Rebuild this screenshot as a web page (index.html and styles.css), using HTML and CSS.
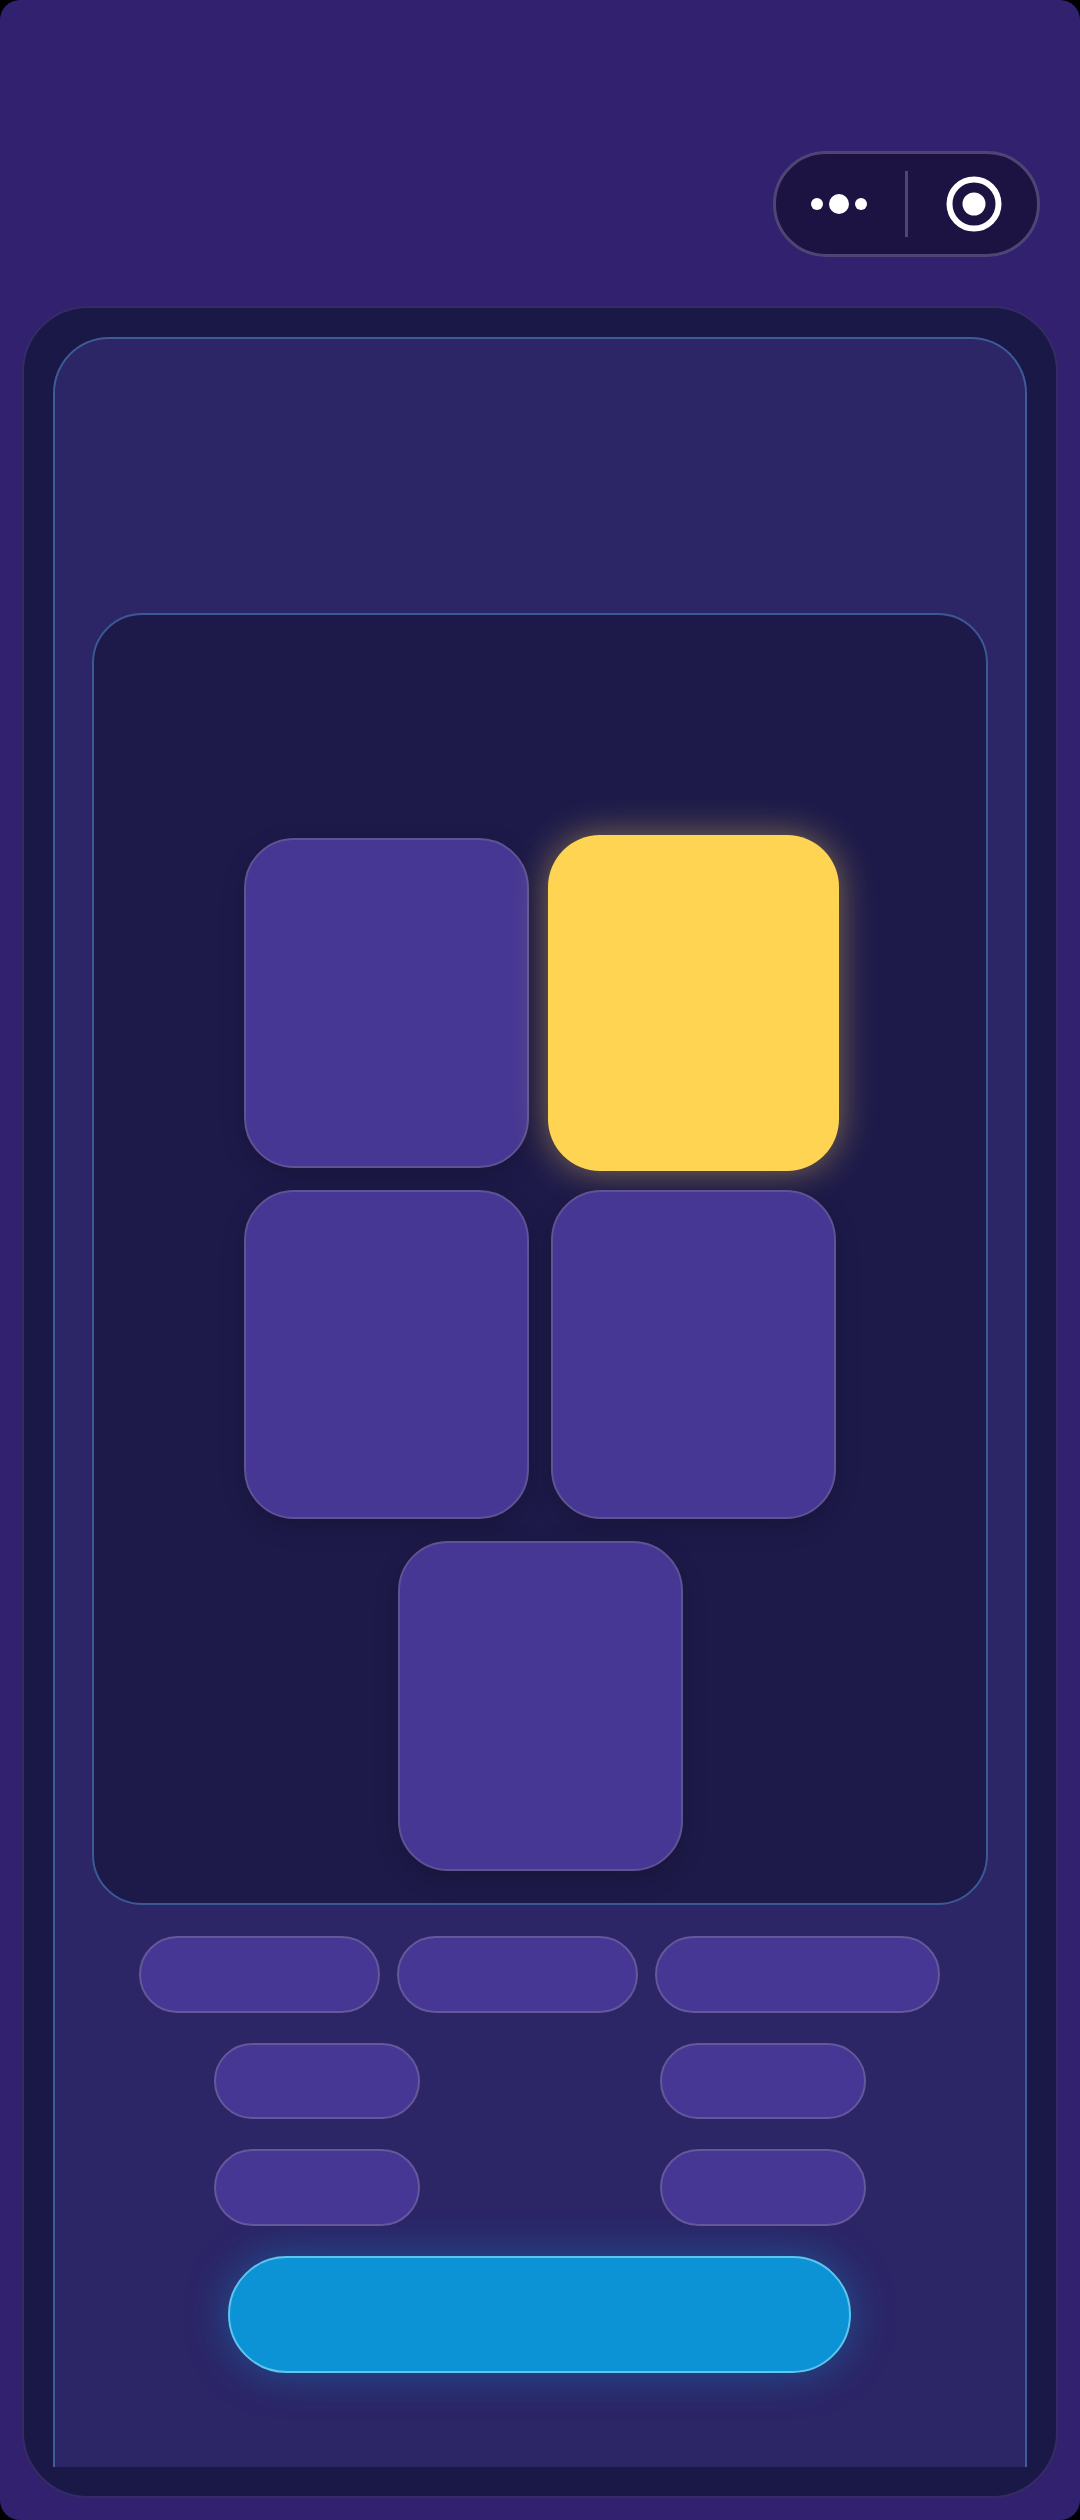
FILE: index.html
```html
<!DOCTYPE html>
<html lang="en">
<head>
  <meta charset="UTF-8">
  <meta name="viewport" content="width=device-width, initial-scale=1.0">
  <title>Card Game</title>
  <link rel="stylesheet" href="styles.css">
</head>
<body>
  <div class="screen">
    <div class="top-bar">
      <div class="capsule">
        <div class="capsule-side left">
          <svg class="dots-icon" width="56" height="24" viewBox="0 0 56 24">
            <circle cx="6" cy="12" r="6" fill="#fff"/>
            <circle cx="28" cy="12" r="10" fill="#fff"/>
            <circle cx="50" cy="12" r="6" fill="#fff"/>
          </svg>
        </div>
        <div class="capsule-divider"></div>
        <div class="capsule-side right">
          <svg class="target-icon" width="56" height="56" viewBox="0 0 56 56">
            <circle cx="28" cy="28" r="24.5" fill="none" stroke="#fff" stroke-width="6"/>
            <circle cx="28" cy="28" r="11.5" fill="#fff"/>
          </svg>
        </div>
      </div>
    </div>

    <div class="frame">
      <div class="panel">
        <div class="stage">
          <div class="card-row">
            <div class="card"></div>
            <div class="card active"></div>
          </div>
          <div class="card-row">
            <div class="card"></div>
            <div class="card"></div>
          </div>
          <div class="card-row">
            <div class="card"></div>
          </div>
        </div>

        <div class="pill-row first">
          <div class="pill"></div>
          <div class="pill"></div>
          <div class="pill wide"></div>
        </div>
        <div class="pill-row spread">
          <div class="pill small"></div>
          <div class="pill small"></div>
        </div>
        <div class="pill-row spread">
          <div class="pill small"></div>
          <div class="pill small"></div>
        </div>

        <div class="main-button"></div>
      </div>
    </div>
  </div>
</body>
</html>
```

FILE: styles.css
```css
* {
  box-sizing: border-box;
}

html,
body {
  margin: 0;
  padding: 0;
  background-color: #000;
}

body {
  font-family: "Liberation Sans", Arial, sans-serif;
}

.screen {
  width: 1080px;
  height: 2520px;
  padding-top: 151px;
  background-color: #31216e;
  border-radius: 20px;
  overflow: hidden;
}

.top-bar {
  display: flex;
  justify-content: flex-end;
  padding-right: 40px;
}

.capsule {
  display: flex;
  align-items: center;
  width: 267px;
  height: 106px;
  background-color: #1c1342;
  border: 3px solid #4f4575;
  border-radius: 53px;
}

.capsule-side {
  flex: 1;
  display: flex;
  justify-content: center;
  align-items: center;
}

.capsule-side.left {
  padding-right: 3px;
}

.capsule-side.right {
  padding-left: 3px;
}

.capsule-divider {
  width: 3px;
  height: 66px;
  background-color: #4f4575;
}

.frame {
  height: 2192px;
  margin: 49px 22px 0;
  padding: 29px 29px 0;
  background-color: #1a1846;
  border: 2px solid #352c66;
  border-radius: 66px;
}

.panel {
  height: 2130px;
  padding: 0 37px;
  background-color: #2c2566;
  border: 2px solid #3e5c97;
  border-bottom: none;
  border-radius: 56px 56px 0 0;
}

.stage {
  display: flex;
  flex-direction: column;
  gap: 21.7px;
  height: 1292.5px;
  margin-top: 273.5px;
  padding-top: 223.5px;
  background-color: #1d1a4a;
  border: 2px solid #3a5a96;
  border-radius: 50px;
}

.card-row {
  display: flex;
  justify-content: center;
  gap: 22px;
}

.card {
  width: 285px;
  height: 329.6px;
  background-color: #463794;
  border: 2px solid #5f5394;
  border-radius: 50px;
  box-shadow: 0 8px 24px rgba(0, 0, 0, 0.2);
}

.card.active {
  width: 291px;
  height: 336px;
  margin: -3px;
  background-color: #ffd452;
  border: none;
  border-radius: 52px;
  box-shadow: 0 0 36px rgba(255, 212, 82, 0.45);
}

.pill-row {
  display: flex;
  justify-content: center;
  gap: 17px;
  margin-top: 30px;
  padding-right: 2px;
}

.pill-row.first {
  margin-top: 31px;
}

.pill-row.spread {
  gap: 240px;
  padding-right: 0;
}

.pill {
  width: 241px;
  height: 76.5px;
  background-color: #463794;
  border: 2px solid #64589a;
  border-radius: 39px;
}

.pill.wide {
  width: 285px;
}

.pill.small {
  width: 206px;
}

.main-button {
  width: 623px;
  height: 117px;
  margin: 30px 0 0 136px;
  background-color: #0c93d5;
  border: 2px solid #5fc4ee;
  border-radius: 59px;
  box-shadow: 0 0 44px rgba(14, 149, 215, 0.42);
}
```
